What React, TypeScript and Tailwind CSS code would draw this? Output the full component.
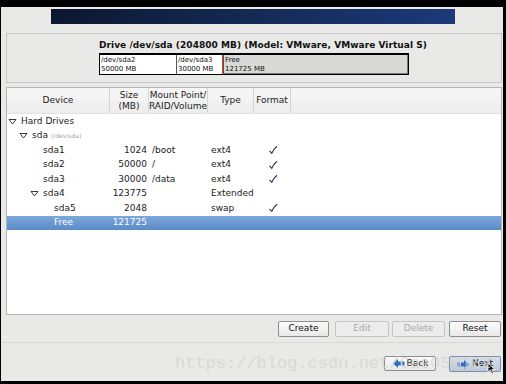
import React from "react";

const font = { fontFamily: '"DejaVu Sans", "Liberation Sans", sans-serif' };

type Row = {
  depth: number;
  name: string;
  extra?: string;
  toggle?: boolean;
  size?: string;
  mount?: string;
  type?: string;
  format?: boolean;
  selected?: boolean;
};

const rows: Row[] = [
  { depth: 0, name: "Hard Drives", toggle: true },
  { depth: 1, name: "sda", extra: "(/dev/sda)", toggle: true },
  { depth: 2, name: "sda1", size: "1024", mount: "/boot", type: "ext4", format: true },
  { depth: 2, name: "sda2", size: "50000", mount: "/", type: "ext4", format: true },
  { depth: 2, name: "sda3", size: "30000", mount: "/data", type: "ext4", format: true },
  { depth: 2, name: "sda4", toggle: true, size: "123775", type: "Extended" },
  { depth: 3, name: "sda5", size: "2048", type: "swap", format: true },
  { depth: 3, name: "Free", size: "121725", selected: true },
];

function Triangle() {
  return (
    <svg width="9" height="7" viewBox="0 0 9 7" className="shrink-0">
      <path d="M1 1.5 L8 1.5 L4.5 6 Z" fill="none" stroke="#3a3a3a" strokeWidth="1" />
    </svg>
  );
}

function Button({ label, disabled, w }: { label: string; disabled?: boolean; w: string }) {
  return (
    <div
      className={`${w} h-[16px] rounded-[2px] border flex items-center justify-center text-[9px] ${
        disabled
          ? "border-[#c4c4c4] bg-[#ececec] text-[#a9a9a9]"
          : "border-[#8d8d8d] bg-gradient-to-b from-[#fbfbfb] to-[#e9e9e9] text-[#111]"
      }`}
    >
      {label}
    </div>
  );
}

export default function App() {
  return (
    <div className="w-[506px] h-[384px] bg-black pt-[7px] pl-[1px] pr-[3px] pb-[3px]" style={font}>
      <div className="relative w-full h-full bg-[#e9e9e8] flex flex-col pl-[5px] pr-[1px] overflow-hidden">
        <div className="ml-[45px] mt-[2px] w-[404px] h-[15px] bg-gradient-to-r from-[#0b1730] via-[#142a55] to-[#1c3a7a]" />

        <div className="mt-[9px] h-[50px] border border-[#c6c6c6] flex flex-col pl-[92px] pt-[5px]">
          <div className="text-[9px] font-bold text-[#111] leading-[12px] tracking-[0.05px]">
            Drive /dev/sda (204800 MB) (Model: VMware, VMware Virtual S)
          </div>
          <div className="mt-[2px] w-[310px] h-[22px] border border-black border-t-2 flex text-[7px] leading-[9px] text-[#111]">
            <div className="w-[76px] bg-white pl-[1px] pt-[1px]">
              <div>/dev/sda2</div>
              <div>50000 MB</div>
            </div>
            <div className="w-[46px] bg-white border-l border-[#555] pl-[1px] pt-[1px]">
              <div>/dev/sda3</div>
              <div>30000 MB</div>
            </div>
            <div className="w-[1px] bg-[#d0401e]" />
            <div className="flex-1 bg-[#d9d9d7] border-l border-[#555] border-r border-b border-r-[#777] border-b-[#777] pl-[1px] pt-[1px]">
              <div>Free</div>
              <div>121725 MB</div>
            </div>
          </div>
        </div>

        <div className="mt-[4px] h-[228px] border border-[#b4b4b4] bg-white flex flex-col text-[9px] text-[#222]">
          <div className="h-[26px] flex border-b border-[#e2e2e2] bg-gradient-to-b from-[#f7f7f7] to-[#ececec] text-[#222] leading-[11px]">
            <div className="w-[103px] border-r border-[#d4d4d4] flex items-center justify-center">Device</div>
            <div className="w-[39px] border-r border-[#d4d4d4] flex flex-col items-center justify-center">
              <span>Size</span>
              <span>(MB)</span>
            </div>
            <div className="w-[59px] border-r border-[#d4d4d4] flex flex-col items-center justify-center">
              <span>Mount Point/</span>
              <span>RAID/Volume</span>
            </div>
            <div className="w-[46px] border-r border-[#d4d4d4] flex items-center justify-center">Type</div>
            <div className="w-[37px] border-r border-[#d4d4d4] flex items-center justify-center">Format</div>
          </div>
          {rows.map((r) => (
            <div
              key={r.name}
              className={`h-[14.5px] flex items-center ${
                r.selected
                  ? "bg-gradient-to-b from-[#7ba8d9] to-[#5a8bc8] text-white"
                  : ""
              }`}
            >
              <div className="w-[103px] flex items-center" style={{ paddingLeft: 1 + r.depth * 11 }}>
                {r.toggle ? <Triangle /> : <span className="w-[9px] shrink-0" />}
                <span className="ml-[4px]">{r.name}</span>
                {r.extra && <span className="ml-[3px] text-[6px] text-[#a0a0a0]">{r.extra}</span>}
              </div>
              <div className="w-[37px] text-right">{r.size}</div>
              <div className="w-[61px] pl-[5px]">{r.mount}</div>
              <div className="w-[46px] pl-[3px]">{r.type}</div>
              <div className="w-[37px] flex justify-center">
                {r.format && (
                  <svg width="10" height="10" viewBox="0 0 10 10">
                    <path d="M1.5 5.8 L3.8 8.3 Q6 3.5 9 1.2" fill="none" stroke="#2c3448" strokeWidth="1.1" />
                  </svg>
                )}
              </div>
            </div>
          ))}
        </div>

        <div className="mt-[6px] flex justify-end pr-[1px]">
          <Button label="Create" w="w-[51px]" />
          <div className="w-[6px]" />
          <Button label="Edit" w="w-[54px]" disabled />
          <div className="w-[3px]" />
          <Button label="Delete" w="w-[53px]" disabled />
          <div className="w-[4px]" />
          <Button label="Reset" w="w-[52px]" />
        </div>

        <div className="mt-[5px] h-px bg-[#d8d8d8] -ml-[5px]" />

        <div className="mt-[13px] flex justify-end gap-[13px] pr-[1px]">
          <div className="w-[52px] h-[15px] rounded-[2px] border border-[#8d8d8d] bg-gradient-to-b from-[#fbfbfb] to-[#e9e9e9] flex items-center justify-center gap-[2px] text-[9px] text-[#111]">
            <svg width="13" height="11" viewBox="0 0 13 11">
              <path d="M1 5.5 L6 1 L6 3.5 L9 3.5 L9 7.5 L6 7.5 L6 10 Z" fill="#2f6fc0" />
              <rect x="10" y="3.5" width="2.5" height="4" fill="#2f6fc0" />
            </svg>
            <span>Back</span>
          </div>
          <div className="relative w-[52px] h-[16px] rounded-[2px] border border-[#7e8fa8] bg-gradient-to-b from-[#d8e0ea] to-[#bcc8d8] flex items-center justify-center gap-[2px] text-[9px] text-[#111]">
            <svg width="13" height="11" viewBox="0 0 13 11">
              <rect x="0.5" y="3.5" width="2.5" height="4" fill="#2f6fc0" />
              <path d="M12 5.5 L7 1 L7 3.5 L4 3.5 L4 7.5 L7 7.5 L7 10 Z" fill="#2f6fc0" />
            </svg>
            <span>Next</span>
            <svg width="9" height="13" viewBox="0 0 9 13" className="absolute left-[37px] top-[5px]">
              <path d="M1 1 L1 10 L3.2 8 L5 12 L6.5 11.3 L4.8 7.5 L7.8 7.5 Z" fill="#111" stroke="#fff" strokeWidth="0.8" />
            </svg>
          </div>
        </div>

        <div
          className="absolute left-[174px] top-[347px] text-[17px] leading-[20px] text-[#d2d2d0] opacity-70 whitespace-nowrap pointer-events-none"
          style={{ fontFamily: '"Liberation Mono", "DejaVu Sans Mono", monospace' }}
        >
          https://blog.csdn.net/Cae050162
        </div>
      </div>
    </div>
  );
}
